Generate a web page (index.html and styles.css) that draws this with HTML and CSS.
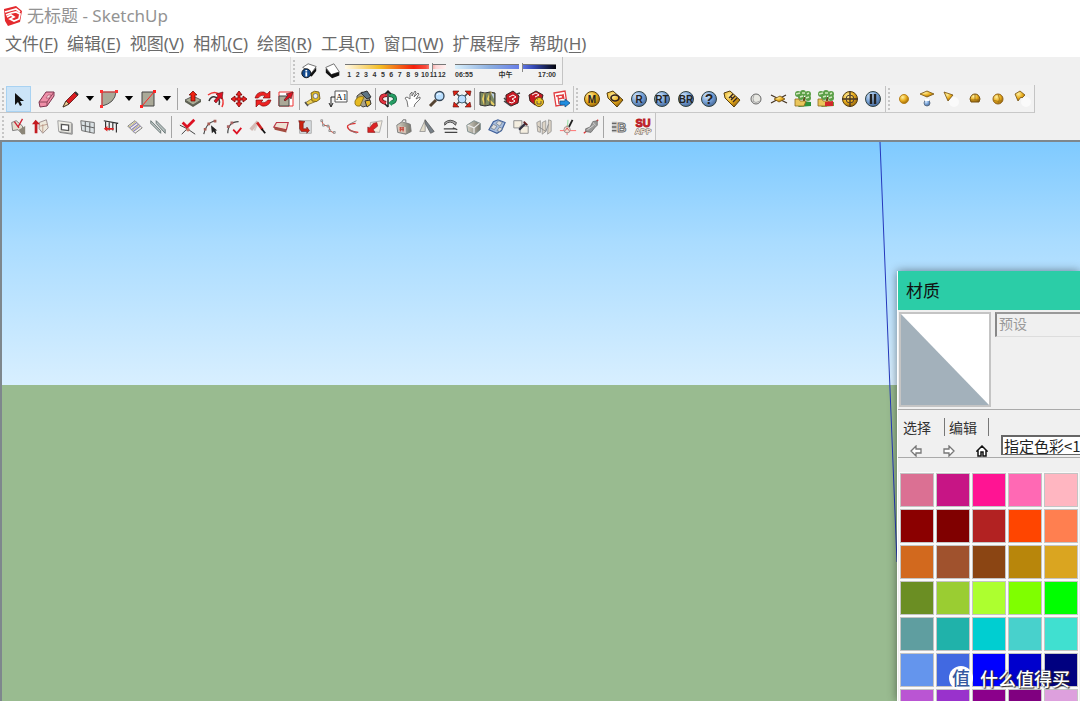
FILE: index.html
```html
<!DOCTYPE html>
<html lang="zh-CN">
<head>
<meta charset="utf-8">
<title>无标题 - SketchUp</title>
<link rel="stylesheet" href="styles.css">
</head>
<body>
<svg class="defs" aria-hidden="true">
  <defs>
    <radialGradient id="gold" cx=".35" cy=".3" r=".8"><stop offset="0" stop-color="#fff0a0"/><stop offset=".5" stop-color="#e8ac1c"/><stop offset="1" stop-color="#8a5a08"/></radialGradient>
    <radialGradient id="blue" cx=".35" cy=".3" r=".8"><stop offset="0" stop-color="#d5e9ff"/><stop offset=".5" stop-color="#78a2d6"/><stop offset="1" stop-color="#3b5c8e"/></radialGradient>
    <linearGradient id="stone" x2="1"><stop offset="0" stop-color="#d8d4c8"/><stop offset="1" stop-color="#777468"/></linearGradient>
  </defs>
</svg>
<header class="titlebar">
  <svg class="logo" viewBox="0 0 20 20"><path d="M1 3 13 0l6 5-2 11-12 4-3-5z" fill="#e42a2e"/><path d="m2 6 11-3 4 3M4 11l4-2 3 2-4 2 4 2 5-2 1-5-4-2-5 1M3 9l5-2" fill="none" stroke="#fff" stroke-width="1.700"/></svg>
  <h1>无标题 - SketchUp</h1>
</header>
<nav class="menubar">
  <button>文件(<u>F</u>)</button><button>编辑(<u>E</u>)</button><button>视图(<u>V</u>)</button><button>相机(<u>C</u>)</button><button>绘图(<u>R</u>)</button><button>工具(<u>T</u>)</button><button>窗口(<u>W</u>)</button><button>扩展程序</button><button>帮助(<u>H</u>)</button>
</nav>
<section class="toolbars">
  <div class="bar shadows">
    <span class="grip"></span>
    <button aria-label="阴影设置"><svg viewBox="0 0 20 20"><path d="m3 6 6-4 9 3-5 7z" fill="#fff" stroke="#666"/><path d="m13 12 5-6v4l-5 6-4-1z" fill="#111"/><circle cx="7" cy="12.500" r="5" fill="#124a8e" stroke="#111"/><path d="M7 9v1.500M7 11.500V16" stroke="#fff" stroke-width="2"/></svg></button>
    <button aria-label="显示阴影"><svg viewBox="0 0 20 20"><path d="m2 6 9-4 6 9-9 3z" fill="#fff" stroke="#666"/><path d="m8 14 9-3v4l-8 3-7-6V7z" fill="#111"/></svg></button>
    <div class="range month">
      <input type="range" min="0" max="100" value="87" aria-label="日期">
      <div class="months"><span>1</span><span>2</span><span>3</span><span>4</span><span>5</span><span>6</span><span>7</span><span>8</span><span>9</span><span>10</span><span>11</span><span>12</span></div>
    </div>
    <div class="range time">
      <input type="range" min="0" max="100" value="66" aria-label="时间">
      <div class="hours"><span>06:55</span><span>中午</span><span>17:00</span></div>
    </div>
  </div>
  <div class="bar main">
    <span class="grip"></span>
    <button class="selected" aria-label="选择"><svg viewBox="0 0 20 20"><path d="M6 4v12l3-3 2 4 2-1-2-4h4z" fill="#111"/></svg></button>
    <div class="group draw">
      <button aria-label="擦除"><svg viewBox="0 0 20 20"><path d="m2 13 7-10h8v4l-7 10-7 1z" fill="#ef8fa8" stroke="#7c3550"/><path d="m2 13 8 0 7-10M10 13v4" fill="none" stroke="#8c4259"/><path d="m9 9 2-3h3l-2 3z" fill="#fbdbe2" stroke="#a8586f" stroke-width=".7"/></svg></button>
      <button aria-label="直线"><svg viewBox="0 0 20 20"><path d="M2 18 5 12 14 3l3 3L8 15z" fill="#da1c20" stroke="#511" stroke-width=".8"/><path d="m2 18 3-6 3 3z" fill="#f3cf96" stroke="#332" stroke-width=".8"/><path d="m14 3 3 3" stroke="#333" stroke-width="2"/></svg></button>
      <button class="more" aria-label="更多线条"><svg viewBox="0 0 10 6"><path d="M0 0h10L5 6z"/></svg></button>
      <button aria-label="圆弧"><svg viewBox="0 0 20 20"><path d="M3 3h14q-1 11-14 14z" fill="#aaa998" stroke="#555"/><path d="M3 17V3h14" fill="none" stroke="#e44"/><path d="M1 1h3v3H1zM16 1h3v3h-3zM1 16h3v3H1z" fill="#f33"/></svg></button>
      <button class="more" aria-label="更多圆弧"><svg viewBox="0 0 10 6"><path d="M0 0h10L5 6z"/></svg></button>
      <button aria-label="矩形"><svg viewBox="0 0 20 20"><path d="M4 3h12v14H4z" fill="#aaa998" stroke="#444"/><path d="M4 17 16 3" stroke="#f22"/><path d="M2 16h3v3H2zM15 1h3v3h-3z" fill="#f22"/></svg></button>
      <button class="more" aria-label="更多形状"><svg viewBox="0 0 10 6"><path d="M0 0h10L5 6z"/></svg></button>
    </div>
    <span class="sep"></span>
    <div class="group five">
      <button aria-label="推拉"><svg viewBox="0 0 20 20"><path d="m2 11 8-4 8 4-8 5z" fill="#a9ac94" stroke="#444" stroke-width=".8"/><path d="M2 11v2l8 5 8-5v-2l-8 5z" fill="#5c5f50"/><path d="M10 2 6 6h2v6h4V6h2z" fill="#e21" stroke="#600" stroke-width=".7"/></svg></button>
      <button aria-label="偏移"><svg viewBox="0 0 20 20"><path d="M2 6q7-5 12 0 5 5 2 12" fill="none" stroke="#e33" stroke-width="1.500"/><path d="M3 12q2-5 6-4 6 1 4 8" fill="none" stroke="#333" stroke-width="1.500"/><path d="m8 12 4-5-2-2 7-2-1 7-2-1-4 5z" fill="#d12" stroke="#511" stroke-width=".6"/></svg></button>
      <button aria-label="移动"><svg viewBox="0 0 20 20"><path d="m10 2 3 4h-2v3h3V7l4 3-4 3v-2h-3v3h2l-3 4-3-4h2v-3H6v2l-4-3 4-3v2h3V6H7z" fill="#e22" stroke="#700" stroke-width=".8"/></svg></button>
      <button aria-label="旋转"><svg viewBox="0 0 20 20"><path d="M2 9Q4 2 11 3l3 2 3-3v7h-7l2-2Q8 5 5 9zM18 11q-2 7-9 6l-3-2-3 3v-7h7l-2 2q4 2 7-2z" fill="#e22" stroke="#700" stroke-width=".6"/></svg></button>
      <button aria-label="缩放"><svg viewBox="0 0 20 20"><path d="M3 3h14v14H3z" fill="#fff" stroke="#e33"/><path d="M3 7h10v10H3z" fill="#aaa998" stroke="#444"/><path d="m8 11 4-5-2-1 7-2-2 7-1-2-5 4z" fill="#d12" stroke="#411" stroke-width=".6"/></svg></button>
    </div>
    <span class="sep"></span>
    <div class="group three">
      <button aria-label="卷尺"><svg viewBox="0 0 20 20"><path d="m2 14 8-5 4 3-10 4z" fill="#eed055" stroke="#776322" stroke-width=".8"/><path d="M8 4q3-3 8-1l1 7q-3 4-8 2z" fill="#e1b91e" stroke="#665017" stroke-width=".8"/><circle cx="12.500" cy="7" r="2.500" fill="#eee" stroke="#777"/><path d="m2 13 3 4" stroke="#555" stroke-width="1.500"/></svg></button>
      <button aria-label="文字"><svg viewBox="0 0 20 20"><path d="M7 2h12v11H7z" fill="#fff" stroke="#555"/><path d="M7 8H3v9m-2-3 2 4 2-4" fill="none" stroke="#222"/><text x="8" y="11" class="tag">A1</text></svg></button>
      <button aria-label="材质"><svg viewBox="0 0 20 20"><path d="m4 7 5-4 8 4-1 9-6 2-6-4z" fill="#a8a28b" stroke="#444"/><path d="M2 12q3-6 9-4L7 17q-4 1-5-2z" fill="#e6ba21" stroke="#7c6614" stroke-width=".8"/><path d="m8 4 6-2 4 6-4 2z" fill="#5e7484" stroke="#333"/><path d="m9 5 5 5M12 12l5-1 1 4-4 3z" fill="#e5b829" stroke="#333"/></svg></button>
    </div>
    <span class="sep"></span>
    <div class="group four">
      <button aria-label="环绕观察"><svg viewBox="0 0 20 20"><path d="M9 6q-6 0-6 4 0 3 5 4" fill="none" stroke="#611" stroke-width="4"/><path d="M9 6q-6 0-6 4 0 3 5 4" fill="none" stroke="#e23340" stroke-width="2.500"/><path d="M11 6q6 0 6 4 0 3-4 4" fill="none" stroke="#153" stroke-width="4"/><path d="M11 6q6 0 6 4 0 3-4 4" fill="none" stroke="#269e65" stroke-width="2.500"/><path d="m14 11-4 3 4 3z" fill="#269e65"/><path d="M10 2v16M7 5l3-3 3 3M7 15l3 3" fill="none" stroke="#222" stroke-width="1.500"/></svg></button>
      <button aria-label="平移"><svg viewBox="0 0 20 20"><path d="M5 18 4 12l-2-3 2-1 3 2V5l2-2v4l3-5 1 1-2 5 4-4 1 1-3 5 4-2v2l-5 5-1 3" fill="#fff" stroke="#666" stroke-width=".9"/></svg></button>
      <button aria-label="缩放视图"><svg viewBox="0 0 20 20"><path d="m3 17 6-6" stroke="#543" stroke-width="3"/><circle cx="12.500" cy="7" r="4.500" fill="#b9dfff" stroke="#345" stroke-width="1.300"/><path d="M10 6q1-2 4-1" stroke="#fff" fill="none"/></svg></button>
      <button aria-label="充满视窗"><svg viewBox="0 0 20 20"><path d="m3 3 14 14M17 3 3 17" stroke="#444" stroke-width="1.500"/><path d="M1 2h6L2 7zM19 2h-6l5 5zM1 18h6l-5-5zM19 18h-6l5-5z" fill="#d21" stroke="#511" stroke-width=".6"/><circle cx="10" cy="10" r="4" fill="#bbdeff" stroke="#467"/></svg></button>
    </div>
    <span class="sep"></span>
    <div class="group four">
      <button aria-label="添加位置"><svg viewBox="0 0 20 20"><path d="m3 3 5 1 5-1 5 1v13l-5-1-5 1-5-1z" fill="#7c8a62" stroke="#333"/><path d="m8 4-2 6 2 6M14 3l-3 7 6 6" fill="none" stroke="#e9cf64" stroke-width="2"/><path d="M8 4v13M13 3v13" stroke="#333"/><path d="m14 4 3 1v5z" fill="#bfd0e8"/></svg></button>
      <button aria-label="3D 模型库"><svg viewBox="0 0 20 20"><path d="m4 6 7-4 6 5-1 7-7 3-5-4z" fill="#c61922" stroke="#392222"/><path d="m7 8 4-2 3 2-4 2 3 2-3 2-3-1" fill="none" stroke="#fff"/><path d="m2 12 7 5M2 9l2 2M15 5l3-1" stroke="#444" stroke-width="1.500"/></svg></button>
      <button aria-label="扩展程序库"><svg viewBox="0 0 20 20"><path d="m3 6 7-4 7 4-2 8-6 2-5-4z" fill="#c61922" stroke="#392222"/><path d="m6 6 4-2 3 2-4 2" fill="none" stroke="#fff"/><circle cx="13" cy="13" r="4.500" fill="#f0c724" stroke="#70520b"/><path d="M11 12v3h4v-3M11 10h1m3 0h1" fill="none" stroke="#654"/></svg></button>
      <button aria-label="布局"><svg viewBox="0 0 20 20"><path d="m3 4 11-2 2 13-11 2z" fill="#fff" stroke="#e23e42" stroke-width="1.300"/><path d="m5 7 6-1 1 3-5 1m0-3 1 8M12 5l1 5" fill="none" stroke="#e23e42" stroke-width="1.300"/><path d="M9 12h5v-2l5 4-5 4v-2H9z" fill="#1e8ce0" stroke="#145287" stroke-width=".8"/></svg></button>
    </div>
    <span class="sep wide"></span><span class="grip"></span>
    <div class="group thirteen">
      <button aria-label="M"><svg viewBox="0 0 20 20"><circle cx="10" cy="10" r="7.500" fill="url(#gold)" stroke="#574010"/><text x="10" y="13.500" class="badge">M</text></svg></button>
      <button aria-label="O"><svg viewBox="0 0 20 20"><path d="m2 4 6-2 10 9-6 7L3 9z" fill="url(#gold)" stroke="#574010"/><ellipse cx="10" cy="9" rx="4" ry="3" fill="none" stroke="#322" stroke-width="1.700"/></svg></button>
      <button aria-label="R"><svg viewBox="0 0 20 20"><circle cx="10" cy="10" r="7.500" fill="url(#blue)" stroke="#344"/><text x="10" y="13.500" class="badge">R</text></svg></button>
      <button aria-label="RT"><svg viewBox="0 0 20 20"><circle cx="10" cy="10" r="7.500" fill="url(#blue)" stroke="#344"/><text x="10" y="13.500" class="badge">RT</text></svg></button>
      <button aria-label="BR"><svg viewBox="0 0 20 20"><circle cx="10" cy="10" r="7.500" fill="url(#blue)" stroke="#344"/><text x="10" y="13.500" class="badge">BR</text></svg></button>
      <button aria-label="帮助"><svg viewBox="0 0 20 20"><circle cx="10" cy="10" r="7.500" fill="url(#blue)" stroke="#344"/><text x="10" y="15" class="badge big">?</text></svg></button>
      <button aria-label="标签"><svg viewBox="0 0 20 20"><path d="m2 4 6-2 10 9-6 7L3 9z" fill="url(#gold)" stroke="#574010"/><path d="m7 9 4-4m-2 6 4-4m-2 6 4-4m-6-1 2 2" stroke="#322" stroke-width="1.300"/></svg></button>
      <button aria-label="球体"><svg viewBox="0 0 20 20"><circle cx="10" cy="10" r="5" fill="#e8e8e2" stroke="#666"/><path d="M6 12q4 3 8 0M8 6q-2 4 0 7" fill="none" stroke="#aaa"/></svg></button>
      <button aria-label="平面"><svg viewBox="0 0 20 20"><path d="m2 6 16 8M2 14l15-8" stroke="#432" stroke-width="1.300"/><path d="m5 10 6-3 5 3-6 3z" fill="url(#gold)" stroke="#765313" stroke-width=".8"/></svg></button>
      <button aria-label="导出代理"><svg viewBox="0 0 20 20"><path d="m5 18 13-1v-4l-8-1z" fill="#2e923a"/><path d="M11 8v8" stroke="#654a20" stroke-width="2"/><g fill="#5b9f47"><circle cx="5" cy="5" r="3"/><circle cx="10" cy="4" r="3"/><circle cx="15" cy="5" r="3"/><circle cx="15" cy="9" r="3"/><circle cx="8" cy="8" r="3"/></g><path d="m3 5 4-1m2 0h3m2 1 2-1m-3 5 3-1M7 8l3-1" stroke="#d1e9bd" stroke-width="1.500"/><path d="M2 10h4l1 2h6l-2 5H2z" fill="#eac65b" stroke="#8b691e" stroke-width=".8"/></svg></button>
      <button aria-label="导入代理"><svg viewBox="0 0 20 20"><path d="m5 18 13-1v-4l-8-1z" fill="#73963a"/><path d="M11 8v8" stroke="#654a20" stroke-width="2"/><g fill="#5b9f47"><circle cx="5" cy="5" r="3"/><circle cx="10" cy="4" r="3"/><circle cx="15" cy="5" r="3"/><circle cx="15" cy="9" r="3"/><circle cx="8" cy="8" r="3"/></g><path d="m3 5 4-1m2 0h3m2 1 2-1m-3 5 3-1M7 8l3-1" stroke="#d1e9bd" stroke-width="1.500"/><path d="M2 10h4l1 2h6l-2 5H2z" fill="#eac65b" stroke="#8b691e" stroke-width=".8"/><path d="m9 13 8-1v5H9z" fill="#d2282b"/></svg></button>
      <button aria-label="网格灯"><svg viewBox="0 0 20 20"><circle cx="10" cy="10" r="7.500" fill="url(#gold)" stroke="#574010"/><path d="M10 2v16M2 10h16" stroke="#432" stroke-width="1.300"/><circle cx="10" cy="10" r="4" fill="none" stroke="#543"/></svg></button>
      <button aria-label="暂停"><svg viewBox="0 0 20 20"><circle cx="10" cy="10" r="7.500" fill="url(#blue)" stroke="#344"/><path d="M8 5v10m4-10v10" stroke="#222" stroke-width="2.500"/></svg></button>
    </div>
    <span class="sep wide"></span><span class="grip"></span>
    <div class="group six">
      <button aria-label="泛光灯"><svg viewBox="0 0 20 20"><circle cx="10" cy="10" r="4.500" fill="url(#gold)" stroke="#b9821b"/></svg></button>
      <button aria-label="面光源"><svg viewBox="0 0 20 20"><path d="m3 5 7-3 7 3-7 3z" fill="url(#gold)" stroke="#765313" stroke-width=".8"/><circle cx="10" cy="14" r="3" fill="url(#blue)" stroke="#567" stroke-width=".8"/><path d="M8 11h4" stroke="#fff" stroke-width="2"/></svg></button>
      <button aria-label="聚光灯"><svg viewBox="0 0 20 20"><circle cx="13" cy="13" r="5" fill="#fafafa"/><path d="m3 3 9 3-5 6z" fill="url(#gold)" stroke="#765313" stroke-width=".8"/></svg></button>
      <button aria-label="穹顶灯"><svg viewBox="0 0 20 20"><path d="M5 10q1-5 5-5t5 5l-1 3H6z" fill="url(#gold)" stroke="#765313"/><path d="M5 11h10M10 5v6" stroke="#876521" stroke-width=".7"/></svg></button>
      <button aria-label="球灯"><svg viewBox="0 0 20 20"><circle cx="10" cy="10" r="5" fill="url(#gold)" stroke="#93631a"/><path d="M5 11q5 3 10 0M10 5q3 5 0 10" fill="none" stroke="#a37618" stroke-width=".8"/></svg></button>
      <button aria-label="光域网"><svg viewBox="0 0 20 20"><circle cx="14" cy="13" r="5" fill="#fafafa"/><path d="m3 5 5-3 5 4-3 3-1-1-3 4z" fill="url(#gold)" stroke="#765313" stroke-width=".8"/></svg></button>
    </div>
  </div>
  <div class="bar plugins">
    <span class="grip"></span>
    <div class="group seven">
      <button aria-label="拉线成面"><svg viewBox="0 0 20 20"><path d="m3 5 5-2 7 6v9l-5-5-6 1z" fill="#e4dece" stroke="#777"/><path d="m11 13 7-4v9h-4z" fill="#8c8678"/><path d="m6 4 5 7M15 1l-5 9" stroke="#c23" stroke-width="1.500"/></svg></button>
      <button aria-label="生成墙体"><svg viewBox="0 0 20 20"><path d="m8 5 8-3 2 9-6 6-4-5z" fill="#eee8db" stroke="#988"/><path d="m4 2-4 5h3v10h3V7h3z" fill="#c31b20"/><path d="m9 9 8-2m-5 0v9" stroke="#b98" fill="none"/></svg></button>
      <button aria-label="开窗"><svg viewBox="0 0 20 20"><path d="m2 3 15 2v12L3 15z" fill="#efeee7" stroke="#999"/><path d="m6 7 8 1v6l-8-1z" fill="#fff" stroke="#555" stroke-width="1.500"/><path d="m4 16 14 2V6" fill="none" stroke="#777"/></svg></button>
      <button aria-label="幕墙"><svg viewBox="0 0 20 20"><path d="m2 3 15 2v12L3 14z" fill="#dae1e4" stroke="#666"/><path d="m3 8 14 3M7 4v11m5-10v11" stroke="#555"/></svg></button>
      <button aria-label="栏杆"><svg viewBox="0 0 20 20"><path d="m2 3 16 3M4 4v9m4-8v9m4-9v9m4-8v10" stroke="#333" stroke-width="1.300"/><path d="m2 12 4-3v2h7v2H6v2z" fill="#d22"/></svg></button>
      <button aria-label="楼梯"><svg viewBox="0 0 20 20"><path d="m2 9 8-6 8 8-8 6z" fill="#f4f2ea" stroke="#555" stroke-width=".8"/><path d="m4 11 8-6m-6 8 8-6m-6 8 8-6" stroke="#8b83bd" stroke-width="1.300"/><path d="m3 10 8-6m-4 10 8-6" stroke="#c5b96b"/></svg></button>
      <button aria-label="坡道"><svg viewBox="0 0 20 20"><path d="m2 6 11 11v-3L2 3zM8 3l10 10v4L8 6z" fill="#b9c3c2" stroke="#63716f"/></svg></button>
    </div>
    <span class="sep"></span>
    <div class="group nine">
      <button aria-label="修复直线"><svg viewBox="0 0 20 20"><path d="M1 8q8 3 17 10M3 18l6-6" stroke="#333" fill="none"/><path d="m4 5 5 5 8-8" fill="none" stroke="#d12" stroke-width="3"/><circle cx="10" cy="13" r="2" fill="#c76"/></svg></button>
      <button aria-label="选连续线"><svg viewBox="0 0 20 20"><path d="M2 18Q4 6 14 3" fill="none" stroke="#444" stroke-width="1.300"/><path d="M2 11h3v3H2zM6 5h3v3H6zM13 2h3v3h-3z" fill="#a65d54"/><path d="m10 8 1 9 2-2 2 3 1-1-1-3h2z" fill="#222"/></svg></button>
      <button aria-label="焊接线条"><svg viewBox="0 0 20 20"><path d="M2 17Q2 4 14 4" fill="none" stroke="#444" stroke-width="1.300"/><path d="M1 8h3v3H1zM5 4h3v3H5z" fill="#a66"/><path d="m8 13 4 4 5-6" fill="none" stroke="#d12" stroke-width="2"/></svg></button>
      <button aria-label="线转柱体"><svg viewBox="0 0 20 20"><path d="m2 13 8-9" stroke="#d4bab5" stroke-width="4" fill="none"/><path d="m6 14 4-9" stroke="#d7cfca" stroke-width="2"/><path d="m9 5 6 8" stroke="#c22" stroke-width="3"/><path d="m14 12 4 5" stroke="#111" stroke-width="2"/></svg></button>
      <button aria-label="拉伸面"><svg viewBox="0 0 20 20"><path d="m2 10 3-5h13l-2 8z" fill="#eee1d3" stroke="#b34" stroke-width="1.300"/><path d="m2 10 14 3v3L3 13z" fill="#a34d41"/></svg></button>
      <button aria-label="旋转对象"><svg viewBox="0 0 20 20"><path d="M4 3h13v14H4z" fill="#d6dce0" stroke="#aaa"/><path d="m3 3 7 1-2 2v6h4v-2l3 4-3 3v-2H6l-2-3V6z" fill="#c21" stroke="#611" stroke-width=".6"/></svg></button>
      <button aria-label="自由曲线"><svg viewBox="0 0 20 20"><path d="m3 3 2 5 6 1 1 5 5 3" stroke="#c43" fill="none"/><path d="M2 2h2v2H2zM4 7h2v2H4zM9 8h2v2H9zM11 13h2v2h-2zM16 15h2v2h-2z" fill="#eee" stroke="#777" stroke-width=".8"/></svg></button>
      <button aria-label="贝兹曲线"><svg viewBox="0 0 20 20"><path d="M14 6Q4 7 5 10q1 5 12 6" fill="none" stroke="#d33" stroke-width="1.500"/><path d="m15 3-8 4m0 6 8 4" stroke="#777"/></svg></button>
      <button aria-label="路径变形"><svg viewBox="0 0 20 20"><path d="m5 5 13-2-3 13-11-1z" fill="#f5eddf" stroke="#aaa"/><path d="m12 5 1 4-5 4 2 3H2v-6l2 1 4-5z" fill="#d22" stroke="#822" stroke-width=".7"/></svg></button>
    </div>
    <span class="sep"></span>
    <div class="group nine">
      <button aria-label="重量盒"><svg viewBox="0 0 20 20"><path d="m2 8 6-4 9 3 1 8-6 3-9-2z" fill="url(#stone)" stroke="#777"/><path d="m3 9 9 1v7l-8-2z" fill="#dcc6b9"/><path d="M5 11h5m-5 2h5m-4-3v5m3-5v5" stroke="#c54e43" stroke-width="1.300"/><path d="m8 4 1-2h3v3" fill="#eee" stroke="#666"/></svg></button>
      <button aria-label="镜像"><svg viewBox="0 0 20 20"><path d="m2 15 6-13v13z" fill="#e2dccb" stroke="#888" stroke-width=".8"/><path d="m8 2 10 13-4 2-6-11z" fill="#778088" stroke="#555" stroke-width=".8"/></svg></button>
      <button aria-label="弯曲"><svg viewBox="0 0 20 20"><path d="M3 8q6-7 12 0l1-3q-7-5-13 0z" fill="#aaa" stroke="#444"/><path d="M2 12h14m-13 4h14m-5-5 5 2" stroke="#444" stroke-width="1.500" fill="none"/></svg></button>
      <button aria-label="倒角"><svg viewBox="0 0 20 20"><path d="m2 8 8-5 7 3v7l-6 5-8-3z" fill="url(#stone)" stroke="#788"/><path d="m3 8 7 3 6-5M10 11v6" stroke="#eee" fill="none" stroke-width="1.300"/></svg></button>
      <button aria-label="阵列"><svg viewBox="0 0 20 20"><path d="m1 13 5-9 5-2 8 3-4 9-5 3z" fill="#a8bfe0" stroke="#40609a" stroke-width="1.300"/><path d="m3 11 3-4 4 2-3 4zm7 3 3-4 3 2-3 3zm-1-8 3-3 4 2-3 4z" fill="#ddd" stroke="#678" stroke-width=".8"/></svg></button>
      <button aria-label="替换"><svg viewBox="0 0 20 20"><path d="M2 3h9v8H2zM9 9h9v8H9z" fill="#f4eee0" stroke="#888"/><path d="m8 13 7-7" stroke="#334" stroke-width="2.500"/><path d="m13 4 4 4" stroke="#622" stroke-width="2"/></svg></button>
      <button aria-label="书架"><svg viewBox="0 0 20 20"><path d="m2 5 4-2v13l-3-1zm6 0 4-2v12l-4 3zm7-3 3 1v12l-4 3z" fill="#ddd4c6" stroke="#888" stroke-width=".8"/><path d="m3 9 9 6 3-8" stroke="#888" fill="none"/></svg></button>
      <button aria-label="坐标轴"><svg viewBox="0 0 20 20"><path d="M1 14h18M9 8v11" stroke="#f66"/><path d="M9 14 10 2" stroke="#8d9"/><path d="m11 10 4-8" stroke="#222" stroke-width="2"/><circle cx="9" cy="13" r="3.500" fill="#f0e1d5" stroke="#988"/><path d="m7 14 2-3 2 3" fill="none" stroke="#d44"/></svg></button>
      <button aria-label="清理"><svg viewBox="0 0 20 20"><path d="m2 17 6-5m5-5 5-5" stroke="#d33" stroke-width="1.500"/><path d="m4 12 5-2 3-6 5-1v5l-3 3-4 5-6-1z" fill="#999" stroke="#666" stroke-width=".8"/><path d="m6 13 7-5m-1-3 3 3" stroke="#ddd"/></svg></button>
    </div>
    <span class="sep"></span>
    <div class="group two">
      <button aria-label="插件库"><svg viewBox="0 0 20 20"><path d="M1 4h6v12H1z" fill="#ccc"/><path d="M1 6h5M1 10h5M1 14h5" stroke="#666" stroke-width="1.500"/><text x="7" y="16" class="mark">B</text></svg></button>
      <button aria-label="SUAPP"><svg viewBox="0 0 20 20"><text x="10" y="9.500" class="su">SU</text><text x="10" y="18" class="app">APP</text></svg></button>
    </div>
  </div>
</section>
<main class="viewport">
  <svg class="axis" viewBox="0 0 20 420"><path d="M2 0 19 420" fill="none" stroke="#2538bd" stroke-width="1"/></svg>
  <aside class="materials">
    <h2>材质</h2>
    <div class="current">
      <svg class="preview" viewBox="0 0 88 92" preserveAspectRatio="none"><path d="M0 0h88v92H0z" fill="#fff"/><path d="M0 0v92h88z" fill="#a3b1bb"/></svg>
      <input type="text" value="预设" aria-label="材质名称" disabled>
    </div>
    <div class="browser">
      <div class="left">
        <div class="tabs"><button>选择</button><button>编辑</button></div>
        <div class="nav">
          <button aria-label="后退"><svg viewBox="0 0 12 12"><path d="m1 6 5-5v3h5v4H6v3z" fill="#fff" stroke="#777" stroke-width="1.300"/></svg></button>
          <button aria-label="前进"><svg viewBox="0 0 12 12"><path d="m11 6-5-5v3H1v4h5v3z" fill="#fff" stroke="#777" stroke-width="1.300"/></svg></button>
          <button aria-label="在模型中"><svg viewBox="0 0 12 12"><path d="m1 6 5-5 5 5H10v5H7V7H5v4H2V6z" fill="#fff" stroke="#111" stroke-width="1.500"/></svg></button>
        </div>
      </div>
      <select aria-label="材质库"><option>指定色彩&lt;1&gt;</option></select>
    </div>
    <div class="swatches">
      <button class="palevioletred" aria-label="色彩 1"></button><button class="mediumvioletred" aria-label="色彩 2"></button><button class="deeppink" aria-label="色彩 3"></button><button class="hotpink" aria-label="色彩 4"></button><button class="lightpink" aria-label="色彩 5"></button>
      <button class="darkred" aria-label="色彩 6"></button><button class="maroon" aria-label="色彩 7"></button><button class="firebrick" aria-label="色彩 8"></button><button class="orangered" aria-label="色彩 9"></button><button class="coral" aria-label="色彩 10"></button>
      <button class="chocolate" aria-label="色彩 11"></button><button class="sienna" aria-label="色彩 12"></button><button class="saddlebrown" aria-label="色彩 13"></button><button class="darkgoldenrod" aria-label="色彩 14"></button><button class="goldenrod" aria-label="色彩 15"></button>
      <button class="olivedrab" aria-label="色彩 16"></button><button class="yellowgreen" aria-label="色彩 17"></button><button class="greenyellow" aria-label="色彩 18"></button><button class="chartreuse" aria-label="色彩 19"></button><button class="lime" aria-label="色彩 20"></button>
      <button class="cadetblue" aria-label="色彩 21"></button><button class="lightseagreen" aria-label="色彩 22"></button><button class="darkturquoise" aria-label="色彩 23"></button><button class="mediumturquoise" aria-label="色彩 24"></button><button class="turquoise" aria-label="色彩 25"></button>
      <button class="cornflowerblue" aria-label="色彩 26"></button><button class="royalblue" aria-label="色彩 27"></button><button class="blue" aria-label="色彩 28"></button><button class="mediumblue" aria-label="色彩 29"></button><button class="navy" aria-label="色彩 30"></button>
      <button class="mediumorchid" aria-label="色彩 31"></button><button class="darkorchid" aria-label="色彩 32"></button><button class="darkmagenta" aria-label="色彩 33"></button><button class="purple" aria-label="色彩 34"></button><button class="plum" aria-label="色彩 35"></button>
    </div>
  </aside>
  <div class="watermark"><span class="seal">值</span><span>什么值得买</span></div>
</main>
</body>
</html>
```

FILE: styles.css
```css
* { box-sizing: border-box; }
body {
  margin: 0;
  height: 100vh;
  display: flex;
  flex-direction: column;
  overflow: hidden;
  background: #f0f0f0;
  font-family: "Noto Sans", "Noto Sans CJK SC", sans-serif;
}
button { border: 0; padding: 0; background: none; font: inherit; color: inherit; }
.defs { position: absolute; width: 0; height: 0; }

.titlebar { display: flex; align-items: center; gap: 4px; height: 32px; padding-left: 3px; background: #fff; flex: none; }
.logo { width: 20px; height: 20px; }
h1 { margin: 0; font-size: 17px; line-height: 24px; font-weight: 400; color: #939393; }
.menubar { display: flex; gap: 9px; height: 25px; padding-left: 5px; background: #fff; color: #6b6b6b; font-size: 17px; line-height: 24px; flex: none; }
.menubar button { line-height: 24px; height: 24px; }
.menubar u { text-underline-offset: 2px; text-decoration-thickness: 1px; }

.toolbars { flex: none; border-bottom: 2px solid #7e878d; }
.bar { display: flex; align-items: center; width: max-content; border-right: 1px solid #c4c4c4; border-bottom: 1px solid #c8c8c8; background: #f2f2f2; }
.bar button { display: flex; align-items: center; justify-content: center; }
.bar svg { width: 18px; height: 18px; display: block; }
.grip { width: 2px; height: 22px; margin: 0 2px; border-left: 2px dotted #c6c6c6; flex: none; }
.sep { width: 1px; height: 22px; background: #a5a5a5; flex: none; }
.sep.wide { height: 26px; background: #c4c4c4; }

.shadows { height: 28px; margin-left: 290px; padding-right: 6px; border-left: 1px solid #ddd; }
.shadows button { width: 24px; height: 25px; }
.range { width: 101px; display: flex; flex-direction: column; }
.time { margin-left: 9px; }
.range input { appearance: none; width: 100%; height: 9px; margin: 0; background: none; }
.range input::-webkit-slider-runnable-track { height: 5px; border-top: 1px solid #777; }
.month input::-webkit-slider-runnable-track { background: linear-gradient(90deg, #fff9e8, #f3bc24 35%, #f4200c 68%, #f64b3e 80%, #fbd5d5 90%, #fff0f0); }
.time input::-webkit-slider-runnable-track { background: linear-gradient(90deg, #d8effb, #8baee0 35%, #667ce9 65%, #3449b4 78%, #03040b); }
.range input::-webkit-slider-thumb { appearance: none; width: 4px; height: 9px; margin-top: -2px; background: #f4f4f4; border-right: 1px solid #888; }
.months, .hours { display: flex; justify-content: space-between; font: bold 7px/8px "Liberation Sans", "Noto Sans CJK SC", sans-serif; color: #333; }
.months { display: grid; grid-template-columns: repeat(12, 1fr); text-align: center; }

.main { height: 28px; }
.bar.main svg { width: 20px; height: 20px; }
.bar .selected { width: 25px; height: 26px; background: #cce4f7; border: 1px solid #a8d2f2; }
.group { display: grid; grid-auto-flow: column; grid-auto-columns: 1fr; align-items: center; justify-items: center; }
.draw { display: flex; justify-content: space-between; width: 146px; padding: 0 5px 0 6px; }
.bar.main .more svg { width: 10px; height: 5px; }
.two { width: 51px; padding-left: 4px; }
.three { width: 75px; }
.four { width: 98px; }
.five { width: 121px; padding: 0 1px 0 3px; }
.six { width: 142px; }
.seven { width: 165px; padding-right: 1px; }
.nine { width: 215px; padding-left: 4px; }
.thirteen { width: 305px; }
.plugins { height: 27px; border-bottom: 0; }
.tag { font: 9px "Liberation Serif", serif; }
.badge { font: bold 10px "Liberation Sans", sans-serif; text-anchor: middle; fill: #222; }
.badge.big { font-size: 14px; }
.mark { font: bold 14px "Liberation Sans", sans-serif; fill: #eee; stroke: #666; }
.su { font: bold 12px "Liberation Sans", sans-serif; text-anchor: middle; fill: #d6222b; stroke: #b51b24; }
.app { font: bold 9px "Liberation Sans", sans-serif; text-anchor: middle; fill: #eee2d6; stroke: #665a52; stroke-width: 1; paint-order: stroke; }

.viewport { flex: 1; position: relative; min-height: 0; overflow: hidden; border-left: 2px solid #7e878d; background: linear-gradient(#7fcaff, #aadcff 18%, #d8efff 43.5%, #99bb90 43.5%); }
.axis { position: absolute; right: 182px; top: 0; width: 20px; height: 420px; }
.materials { position: absolute; top: 129px; right: 0; bottom: 0; width: 183px; overflow: hidden; background: #f0f0f0; border-left: 1px solid #fff; box-shadow: 0 0 9px rgb(0 0 0 / 45%); color: #333; }
.materials h2 { margin: 0; padding-left: 8px; font-size: 17px; line-height: 39px; font-weight: 400; background: #2bcda7; color: #111; }
.current { display: flex; gap: 4px; height: 100px; padding: 2px 0 0 1px; border-bottom: 1px solid #aaa; }
.preview { width: 92px; height: 95px; border: 2px solid #c4c4c4; flex: none; }
.current input { min-width: 0; flex: 1; height: 25px; padding: 0 2px 4px; border: 1px solid #ddd; border-top: 2px solid #999; border-left: 2px solid #888; border-right: 0; background: #f0f0f0; font: 14px/18px "Noto Sans CJK SC", sans-serif; color: #999; }
.browser { display: flex; gap: 10px; height: 48px; border-bottom: 1px solid #aaa; }
.left { width: 93px; flex: none; padding-top: 8px; }
.tabs { display: grid; grid-template-columns: 47px 44px; font: 14px/18px "Noto Sans CJK SC", sans-serif; }
.tabs button { height: 18px; padding-left: 5px; text-align: left; border-right: 1px solid #777; line-height: 18px; }
.tabs button + button { padding-left: 4px; }
.nav { display: grid; grid-template-columns: repeat(3, 33px); padding-top: 9px; }
.nav button { height: 12px; display: flex; justify-content: center; margin-left: 3px; }
.nav svg { width: 12px; height: 12px; }
.browser select { appearance: none; width: 110px; height: 20px; margin-top: 25px; flex: none; padding: 0 1px; border: 2px solid #666; border-width: 2px 1px 1px 2px; border-radius: 0; background: #fff; color: #222; font: 15px/17px "Noto Sans CJK SC", sans-serif; }
.swatches { display: grid; grid-template-columns: repeat(5, 34px); grid-auto-rows: 34px; gap: 2px; padding: 15px 0 0 2px; }
.swatches button { border: 1px solid #c4c4c4; outline: 1px solid #fafafa; }
.palevioletred { background: palevioletred; }
.mediumvioletred { background: mediumvioletred; }
.deeppink { background: deeppink; }
.hotpink { background: hotpink; }
.lightpink { background: lightpink; }
.darkred { background: darkred; }
.maroon { background: maroon; }
.firebrick { background: firebrick; }
.orangered { background: orangered; }
.coral { background: coral; }
.chocolate { background: chocolate; }
.sienna { background: sienna; }
.saddlebrown { background: saddlebrown; }
.darkgoldenrod { background: darkgoldenrod; }
.goldenrod { background: goldenrod; }
.olivedrab { background: olivedrab; }
.yellowgreen { background: yellowgreen; }
.greenyellow { background: greenyellow; }
.chartreuse { background: chartreuse; }
.lime { background: lime; }
.cadetblue { background: cadetblue; }
.lightseagreen { background: lightseagreen; }
.darkturquoise { background: darkturquoise; }
.mediumturquoise { background: mediumturquoise; }
.turquoise { background: turquoise; }
.cornflowerblue { background: cornflowerblue; }
.royalblue { background: royalblue; }
.blue { background: blue; }
.mediumblue { background: mediumblue; }
.navy { background: navy; }
.mediumorchid { background: mediumorchid; }
.darkorchid { background: darkorchid; }
.darkmagenta { background: darkmagenta; }
.purple { background: purple; }
.plum { background: plum; }
.watermark { position: absolute; right: 10px; bottom: 10px; display: flex; align-items: center; gap: 7px; color: #fff; font: 500 18px/26px "Noto Sans CJK SC", sans-serif; text-shadow: 0 0 2px #333, 1px 1px 1px #333; }
.seal { width: 24px; height: 24px; border-radius: 50%; background: #fff; color: #3559a0; text-align: center; line-height: 23px; text-shadow: none; }
```
